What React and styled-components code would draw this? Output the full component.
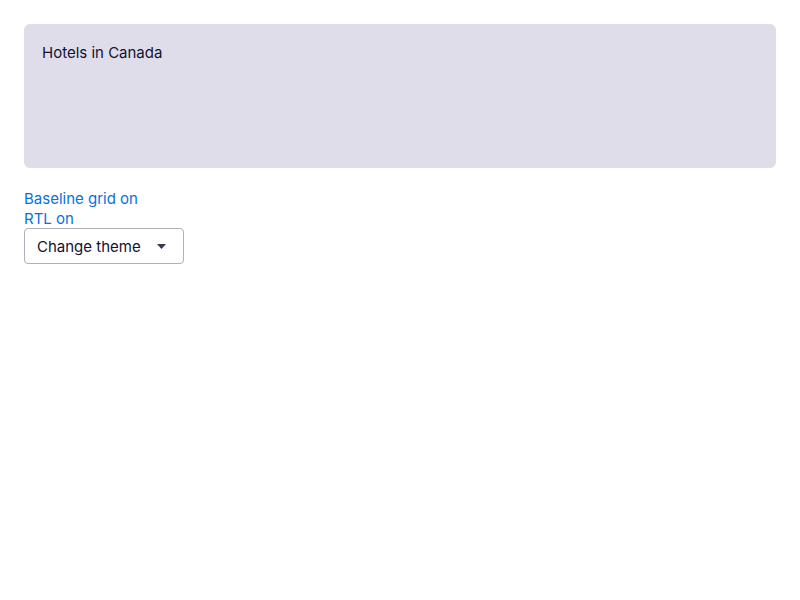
import React from 'react';
import styled, { createGlobalStyle } from 'styled-components';

const GlobalStyle = createGlobalStyle`
  body {
    margin: 0;
    font-family: Inter, "Noto Sans", sans-serif;
    color: #161616;
    background: #fff;
  }
`;

const Page = styled.div`
  padding: 24px;
`;

const Card = styled.div`
  height: 144px;
  box-sizing: border-box;
  padding: 19px 18px;
  background-color: #e0ddeb;
  border-radius: 6px;
  color: #131230;
  font-size: 15px;
  line-height: 20px;
`;

const Controls = styled.div`
  display: flex;
  flex-direction: column;
  align-items: flex-start;
  margin-top: 20px;
`;

const Toggle = styled.button`
  padding: 1px 0 0;
  border: none;
  background: none;
  font: inherit;
  font-size: 15px;
  line-height: 19px;
  color: #0770e3;
  cursor: pointer;
`;

const Select = styled.button`
  display: flex;
  align-items: center;
  width: 160px;
  height: 36px;
  box-sizing: border-box;
  padding: 0 12px;
  border: 1px solid #b2aebe;
  border-radius: 4px;
  background: #fff;
  font: inherit;
  font-size: 15px;
  color: #131230;
  cursor: pointer;
`;

const Caret = styled.svg`
  width: 9px;
  height: 5px;
  margin-left: auto;
  margin-right: 5px;
  fill: #3a3950;
`;

export default function App() {
  return (
    <>
      <GlobalStyle />
      <Page>
        <Card>Hotels in Canada</Card>
        <Controls>
          <Toggle>Baseline grid on</Toggle>
          <Toggle>RTL on</Toggle>
          <Select>
            Change theme
            <Caret viewBox="0 0 9 5">
              <path d="M0 0h9L5 4.6a.7.7 0 0 1-1 0z" />
            </Caret>
          </Select>
        </Controls>
      </Page>
    </>
  );
}
